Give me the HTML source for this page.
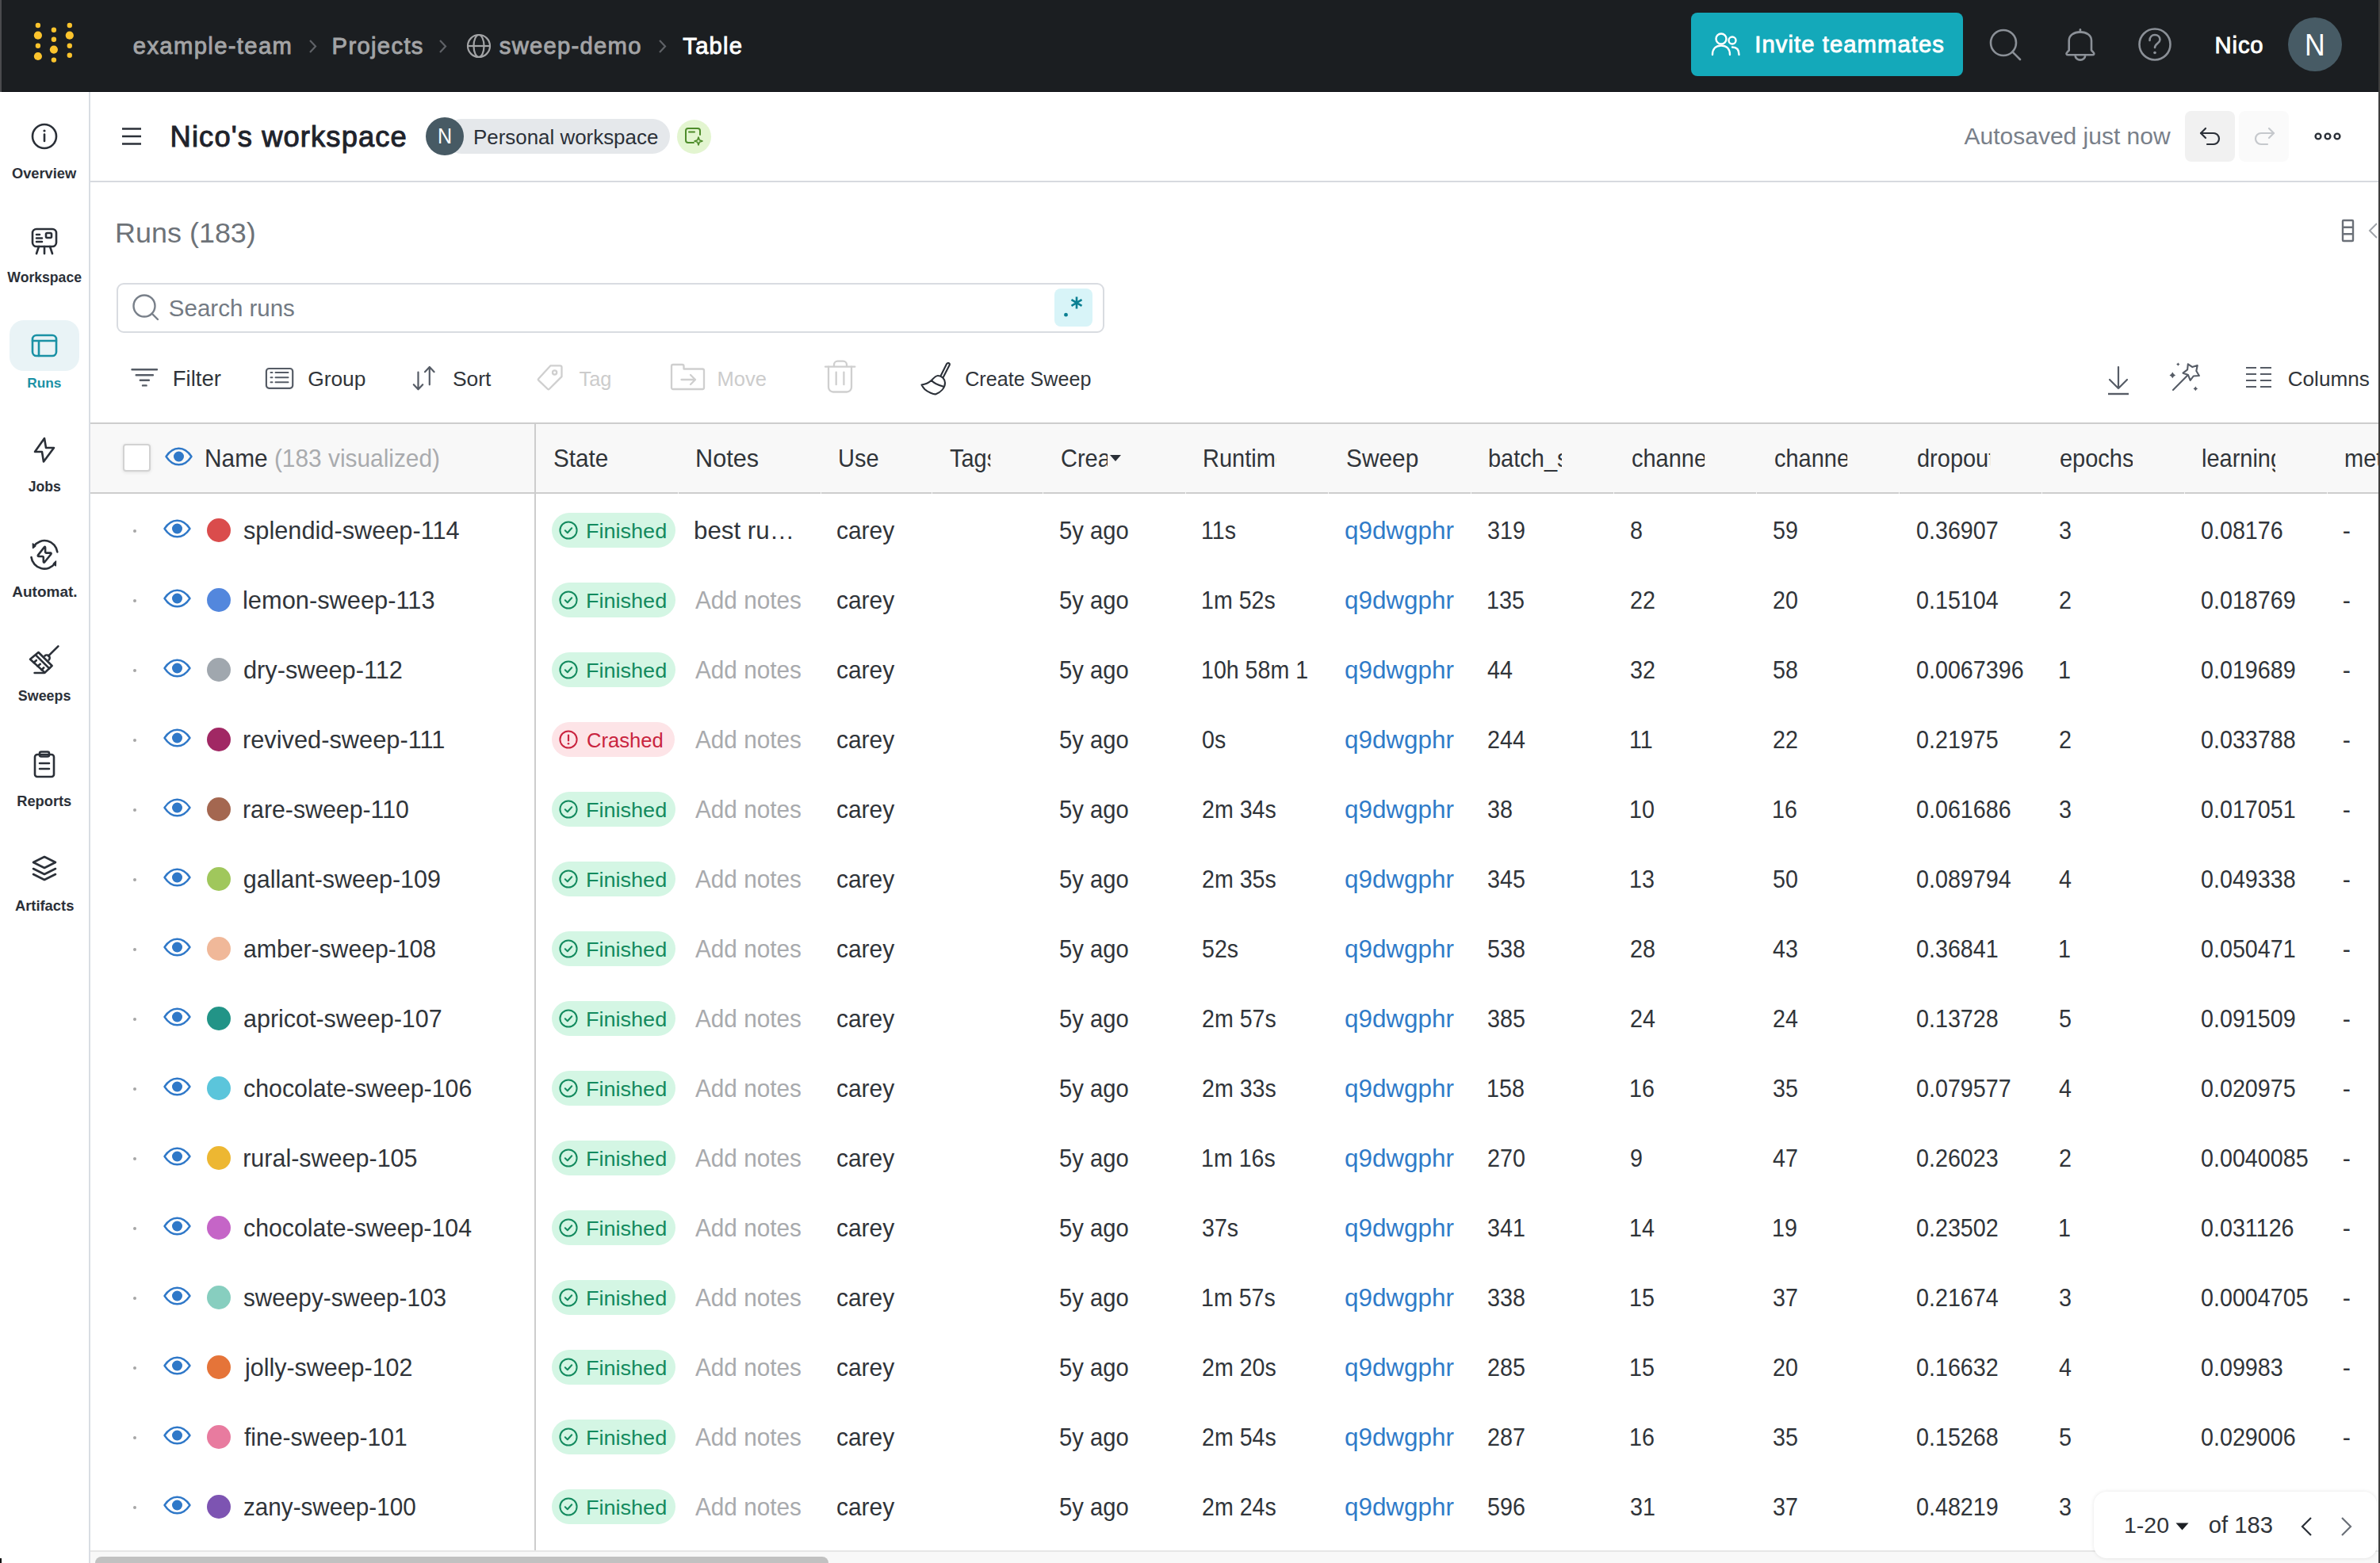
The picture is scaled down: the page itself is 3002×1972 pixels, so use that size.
<!DOCTYPE html>
<html><head><meta charset="utf-8"><title>Runs</title>
<style>
html,body{margin:0;padding:0;width:3002px;height:1972px;overflow:hidden;background:#fff;}
body{position:relative;font-family:"Liberation Sans",sans-serif;}
.t{position:absolute;white-space:nowrap;line-height:1;}
svg{overflow:visible}
</style></head><body>
<div style="position:absolute;left:0px;top:0px;width:3002px;height:116px;background:#1b1e21"></div>
<div style="position:absolute;left:0px;top:114.5px;width:3002px;height:1.5px;background:#0b0e12"></div>
<div style="position:absolute;left:0px;top:0px;width:2px;height:116px;background:#4a4b4e"></div>
<svg style="position:absolute;left:0px;top:0px;" width="116" height="116" viewBox="0 0 116 116" fill="none"><circle cx="47.9" cy="32" r="3.2" fill="#fcc42d"/><circle cx="47.9" cy="44.7" r="5.1" fill="#fcc42d"/><circle cx="47.9" cy="57.8" r="3.2" fill="#fcc42d"/><circle cx="47.9" cy="71" r="5.1" fill="#fcc42d"/><circle cx="67.9" cy="37.8" r="3.2" fill="#fcc42d"/><circle cx="67.9" cy="49.8" r="3.2" fill="#fcc42d"/><circle cx="67.9" cy="62.6" r="5.1" fill="#fcc42d"/><circle cx="67.9" cy="75.6" r="3.2" fill="#fcc42d"/><circle cx="87.8" cy="32" r="3.2" fill="#fcc42d"/><circle cx="87.8" cy="44.7" r="5.1" fill="#fcc42d"/><circle cx="87.8" cy="57.8" r="3.2" fill="#fcc42d"/><circle cx="87.8" cy="69.7" r="3.2" fill="#fcc42d"/></svg>
<div class="t" style="left:167.78px;top:43.57px;font-size:29.22px;color:#a3a4a6;font-weight:400;-webkit-text-stroke:0.9px #a3a4a6;letter-spacing:1.364px;">example-team</div>
<div class="t" style="left:418.61px;top:43.57px;font-size:29.22px;color:#a3a4a6;font-weight:400;-webkit-text-stroke:0.9px #a3a4a6;letter-spacing:1.326px;">Projects</div>
<div class="t" style="left:629.87px;top:43.57px;font-size:29.22px;color:#a3a4a6;font-weight:400;-webkit-text-stroke:0.9px #a3a4a6;letter-spacing:1.253px;">sweep-demo</div>
<div class="t" style="left:861.37px;top:43.57px;font-size:29.22px;color:#ffffff;font-weight:400;-webkit-text-stroke:0.9px #ffffff;letter-spacing:1.175px;">Table</div>
<svg style="position:absolute;left:389px;top:49px;" width="12" height="19" viewBox="0 0 12 19" fill="none"><path d="M2 2 L9 9.5 L2 17" stroke="#5f6267" stroke-width="2.2" fill="none"/></svg>
<svg style="position:absolute;left:553px;top:49px;" width="12" height="19" viewBox="0 0 12 19" fill="none"><path d="M2 2 L9 9.5 L2 17" stroke="#5f6267" stroke-width="2.2" fill="none"/></svg>
<svg style="position:absolute;left:830px;top:49px;" width="12" height="19" viewBox="0 0 12 19" fill="none"><path d="M2 2 L9 9.5 L2 17" stroke="#5f6267" stroke-width="2.2" fill="none"/></svg>
<svg style="position:absolute;left:588px;top:42px;" width="32" height="32" viewBox="0 0 32 32" fill="none"><circle cx="16" cy="16" r="14" stroke="#a3a4a6" stroke-width="2.2"/><ellipse cx="16" cy="16" rx="6.5" ry="14" stroke="#a3a4a6" stroke-width="2.2"/><path d="M2 16 H30" stroke="#a3a4a6" stroke-width="2.2"/></svg>
<div style="position:absolute;left:2133px;top:16px;width:343px;height:79.5px;background:#14a9ba;border-radius:8px"></div>
<svg style="position:absolute;left:2158px;top:40px;" width="38" height="32" viewBox="0 0 38 32" fill="none"><circle cx="13" cy="9" r="6.5" stroke="#fff" stroke-width="2.4"/><path d="M2 29 C2 21 7 17.5 13 17.5 C19 17.5 24 21 24 29" stroke="#fff" stroke-width="2.4" stroke-linecap="round"/><circle cx="27" cy="11" r="4.5" stroke="#fff" stroke-width="2.4"/><path d="M27 19.5 C32.5 19.5 35.5 23 35.5 29" stroke="#fff" stroke-width="2.4" stroke-linecap="round"/></svg>
<div class="t" style="left:2213.22px;top:42.27px;font-size:29.22px;color:#ffffff;font-weight:400;-webkit-text-stroke:0.9px #ffffff;letter-spacing:1.077px;">Invite teammates</div>
<svg style="position:absolute;left:2508px;top:35px;" width="44" height="42" viewBox="0 0 44 42" fill="none"><circle cx="19" cy="19" r="16" stroke="#8b9097" stroke-width="2.6"/><path d="M30.5 30.5 L40 40" stroke="#8b9097" stroke-width="2.6" stroke-linecap="round"/></svg>
<svg style="position:absolute;left:2602px;top:34px;" width="44" height="44" viewBox="0 0 44 44" fill="none"><path d="M7.7 29.5 V17 C7.7 10.5 14 6.4 21.9 6.4 C29.8 6.4 36 10.5 36 17 V29.5 L38.3 31.8 C40.2 33.7 39.4 35.3 37 35.3 H6.8 C4.4 35.3 3.6 33.7 5.5 31.8 Z" stroke="#8b9097" stroke-width="2.6" stroke-linejoin="round"/><path d="M15.6 36 A6.3 5.6 0 0 0 28.2 36" stroke="#8b9097" stroke-width="2.6"/><path d="M21.9 3.2 V6.4" stroke="#8b9097" stroke-width="2.6" stroke-linecap="round"/></svg>
<svg style="position:absolute;left:2696px;top:34px;" width="44" height="44" viewBox="0 0 44 44" fill="none"><circle cx="22" cy="22" r="19.5" stroke="#8b9097" stroke-width="2.6"/><path d="M15.5 17 C15.5 12.5 18.5 10 22 10 C25.8 10 28.5 12.5 28.5 16 C28.5 20.5 22 21 22 26" stroke="#8b9097" stroke-width="2.6" stroke-linecap="round"/><circle cx="22" cy="32.5" r="1.8" fill="#8b9097"/></svg>
<div class="t" style="left:2793.61px;top:43.27px;font-size:29.22px;color:#ffffff;font-weight:400;-webkit-text-stroke:0.9px #ffffff;letter-spacing:0.850px;">Nico</div>
<div style="position:absolute;left:2886px;top:22px;width:68px;height:68px;background:#475b65;border-radius:50%"></div>
<div class="t" style="left:2907.05px;top:36.62px;font-size:39.20px;color:#ffffff;transform:scaleX(0.9085);transform-origin:0 0;">N</div>
<div style="position:absolute;left:112px;top:116px;width:2px;height:1856px;background:#d9dde3"></div>
<div style="position:absolute;left:12px;top:404px;width:88px;height:64px;background:#e9f3f6;border-radius:18px"></div>
<div class="t" style="left:14.97px;top:209.93px;font-size:18.28px;color:#2b3038;font-weight:700;">Overview</div>
<div class="t" style="left:9.35px;top:342.47px;font-size:17.63px;color:#2b3038;font-weight:700;">Workspace</div>
<div class="t" style="left:34.21px;top:474.79px;font-size:17.26px;color:#1a91a5;font-weight:700;">Runs</div>
<div class="t" style="left:35.67px;top:606.49px;font-size:17.61px;color:#2b3038;font-weight:700;">Jobs</div>
<div class="t" style="left:15.32px;top:737.33px;font-size:18.99px;color:#2b3038;font-weight:700;">Automat.</div>
<div class="t" style="left:22.84px;top:870.26px;font-size:17.88px;color:#2b3038;font-weight:700;">Sweeps</div>
<div class="t" style="left:21.20px;top:1001.91px;font-size:18.30px;color:#2b3038;font-weight:700;">Reports</div>
<div class="t" style="left:18.88px;top:1133.85px;font-size:18.37px;color:#2b3038;font-weight:700;">Artifacts</div>
<svg style="position:absolute;left:38px;top:154px;" width="36" height="36" viewBox="0 0 36 36" fill="none"><circle cx="18" cy="18" r="15" stroke="#2b3038" stroke-width="2.6" stroke-linecap="round" stroke-linejoin="round"/><path d="M18 15.5 V24" stroke="#2b3038" stroke-width="2.6" stroke-linecap="round" stroke-linejoin="round"/><circle cx="18" cy="11" r="1.6" fill="#2b3038"/></svg>
<svg style="position:absolute;left:38px;top:286px;" width="36" height="36" viewBox="0 0 36 36" fill="none"><rect x="3" y="3" width="30" height="22" rx="5" stroke="#2b3038" stroke-width="2.6" stroke-linecap="round" stroke-linejoin="round"/><path d="M8 10 H12 M8 14.5 H15 M8 19 H15" stroke="#2b3038" stroke-width="2.6" stroke-linecap="round" stroke-linejoin="round"/><rect x="20" y="8" width="7" height="6" rx="1.5" stroke="#2b3038" stroke-width="2.6" stroke-linecap="round" stroke-linejoin="round"/><path d="M11 25 L8 34 M18 25 V34 M25 25 L28 34" stroke="#2b3038" stroke-width="2.6" stroke-linecap="round" stroke-linejoin="round"/></svg>
<svg style="position:absolute;left:38px;top:418px;" width="36" height="36" viewBox="0 0 36 36" fill="none"><rect x="3" y="5" width="30" height="26" rx="5" stroke="#1a91a5" stroke-width="2.6" stroke-linecap="round" stroke-linejoin="round"/><path d="M3 12 H33 M11 12 V31" stroke="#1a91a5" stroke-width="2.6" stroke-linecap="round" stroke-linejoin="round"/></svg>
<svg style="position:absolute;left:38px;top:550px;" width="36" height="36" viewBox="0 0 36 36" fill="none"><path d="M18 3 L6 20 H15 L17 32.5 L30 15 H20 Z" stroke="#2b3038" stroke-width="2.6" stroke-linecap="round" stroke-linejoin="round"/></svg>
<svg style="position:absolute;left:30px;top:675px;" width="52" height="50" viewBox="0 0 52 50" fill="none"><path d="M12.8 14.2 A16.2 16.2 0 0 1 42.3 21.4" stroke="#2b3038" stroke-width="2.6" stroke-linecap="round" stroke-linejoin="round"/><path d="M9.5 28 A16.6 16.6 0 0 0 39.4 35.8" stroke="#2b3038" stroke-width="2.6" stroke-linecap="round" stroke-linejoin="round"/><path d="M11.3 10.9 L11.5 16.6 L14.8 13.9 Z M40.5 33 L40.3 38.9 L37.3 36.3 Z" fill="#2b3038" stroke="#2b3038" stroke-width="1.4" stroke-linejoin="round"/><path d="M25.9 15.3 L18 25.4 Q17.2 27 19 27 H23.3 Q24.8 27 24.8 28.5 V33.6 Q25 35.4 26.4 34 L34.3 24.2 Q35.2 22.6 33.5 22.6 H28.6 Q27.1 22.6 27.1 21.1 V16 Q26.9 14.2 25.9 15.3 Z" stroke="#2b3038" stroke-width="2.6" stroke-linecap="round" stroke-linejoin="round"/></svg>
<svg style="position:absolute;left:30px;top:800px;" width="52" height="60" viewBox="0 0 52 60" fill="none"><path d="M8 31.8 L18.5 23 L35.6 40 L26.6 48.6 Z" stroke="#2b3038" stroke-width="2.6" stroke-linecap="round" stroke-linejoin="round"/><path d="M15.5 26.8 L32.2 43.3" stroke="#2b3038" stroke-width="2.6" stroke-linecap="round" stroke-linejoin="round"/><path d="M12.8 35.8 L15.8 33.2 M17.6 40.6 L20.8 37.8 M22.4 45.2 L25.2 42.5" stroke="#2b3038" stroke-width="2.6" stroke-linecap="round" stroke-linejoin="round"/><path d="M26.5 27.5 A3.3 3.3 0 0 1 31.6 32.6" stroke="#2b3038" stroke-width="2.6" stroke-linecap="round" stroke-linejoin="round"/><path d="M31 27.6 L43.4 15.3" stroke="#2b3038" stroke-width="2.6" stroke-linecap="round" stroke-linejoin="round"/><path d="M13.6 49 H26" stroke="#2b3038" stroke-width="2.6" stroke-linecap="round" stroke-linejoin="round"/></svg>
<svg style="position:absolute;left:38px;top:946px;" width="36" height="36" viewBox="0 0 36 36" fill="none"><rect x="6" y="6" width="24" height="28" rx="3" stroke="#2b3038" stroke-width="2.6" stroke-linecap="round" stroke-linejoin="round"/><rect x="12" y="2.5" width="12" height="6" rx="2" stroke="#2b3038" stroke-width="2.6" stroke-linecap="round" stroke-linejoin="round"/><path d="M12 17 H24 M12 24 H24" stroke="#2b3038" stroke-width="2.6" stroke-linecap="round" stroke-linejoin="round"/></svg>
<svg style="position:absolute;left:38px;top:1078px;" width="36" height="36" viewBox="0 0 36 36" fill="none"><path d="M18 3 L32 10 L18 17 L4 10 Z" stroke="#2b3038" stroke-width="2.6" stroke-linecap="round" stroke-linejoin="round"/><path d="M4 18 L18 25 L32 18" stroke="#2b3038" stroke-width="2.6" stroke-linecap="round" stroke-linejoin="round"/><path d="M4 25 L18 32 L32 25" stroke="#2b3038" stroke-width="2.6" stroke-linecap="round" stroke-linejoin="round"/></svg>
<div style="position:absolute;left:114px;top:227.5px;width:2886px;height:2px;background:#d7dadf"></div>
<svg style="position:absolute;left:152px;top:160px;" width="28" height="24" viewBox="0 0 28 24" fill="none"><path d="M2 2.5 H26 M2 12 H26 M2 21.5 H26" stroke="#2b3038" stroke-width="2.4"/></svg>
<div class="t" style="left:214.59px;top:154.94px;font-size:36.34px;color:#1f232b;font-weight:400;-webkit-text-stroke:1.0px #1f232b;letter-spacing:1.110px;">Nico&#39;s workspace</div>
<div style="position:absolute;left:560px;top:150px;width:284.5px;height:43.7px;background:#e5e8eb;border-radius:22px"></div>
<div style="position:absolute;left:537px;top:148px;width:48px;height:48px;background:#475a64;border-radius:50%"></div>
<div class="t" style="left:551.89px;top:158.44px;font-size:27.60px;color:#ffffff;transform:scaleX(0.9090);transform-origin:0 0;">N</div>
<div class="t" style="left:596.93px;top:160.85px;font-size:25.93px;color:#2b3038;font-weight:400;">Personal workspace</div>
<div style="position:absolute;left:853.6px;top:150.5px;width:43px;height:43px;background:#e3f5d0;border-radius:50%"></div>
<svg style="position:absolute;left:862px;top:159px;" width="26" height="26" viewBox="0 0 26 26" fill="none"><path d="M13 21 H6 A3 3 0 0 1 3 18 V6 A3 3 0 0 1 6 3 H18 A3 3 0 0 1 21 6 V11" stroke="#4e8c2a" stroke-width="2" fill="none" stroke-linecap="round"/><path d="M7 7.5 H14" stroke="#4e8c2a" stroke-width="2" stroke-linecap="round"/><path d="M19 14 L20.3 17.7 L24 19 L20.3 20.3 L19 24 L17.7 20.3 L14 19 L17.7 17.7 Z" stroke="#4e8c2a" stroke-width="1.6" fill="none" stroke-linejoin="round"/></svg>
<div class="t" style="left:2477.50px;top:157.19px;font-size:30.01px;color:#79808a;font-weight:400;">Autosaved just now</div>
<div style="position:absolute;left:2756px;top:140px;width:63px;height:63.5px;background:#f1f1f1;border-radius:8px"></div>
<div style="position:absolute;left:2824px;top:140px;width:63px;height:63.5px;background:#fafafa;border-radius:8px"></div>
<svg style="position:absolute;left:2773px;top:159px;" width="30" height="26" viewBox="0 0 30 26" fill="none"><path d="M9 3 L3 9 L9 15" stroke="#2b3038" stroke-width="2.2" fill="none" stroke-linecap="round" stroke-linejoin="round"/><path d="M3 9 H19 A7 7 0 0 1 19 23 H11" stroke="#2b3038" stroke-width="2.2" fill="none" stroke-linecap="round"/></svg>
<svg style="position:absolute;left:2841px;top:159px;" width="30" height="26" viewBox="0 0 30 26" fill="none"><path d="M21 3 L27 9 L21 15" stroke="#c5c8cc" stroke-width="2.2" fill="none" stroke-linecap="round" stroke-linejoin="round"/><path d="M27 9 H11 A7 7 0 0 0 11 23 H19" stroke="#c5c8cc" stroke-width="2.2" fill="none" stroke-linecap="round"/></svg>
<svg style="position:absolute;left:2919px;top:163px;" width="34" height="18" viewBox="0 0 34 18" fill="none"><circle cx="5" cy="9" r="3.4" stroke="#2b3038" stroke-width="2.4"/><circle cx="17" cy="9" r="3.4" stroke="#2b3038" stroke-width="2.4"/><circle cx="29" cy="9" r="3.4" stroke="#2b3038" stroke-width="2.4"/></svg>
<div class="t" style="left:145.12px;top:276.08px;font-size:35.94px;color:#6d7278;font-weight:400;">Runs (183)</div>
<svg style="position:absolute;left:2953px;top:276px;" width="18" height="30" viewBox="0 0 18 30" fill="none"><rect x="2" y="2" width="13" height="26" rx="1" stroke="#6b7078" stroke-width="2.4"/><path d="M2 10.7 H15 M2 19.3 H15" stroke="#6b7078" stroke-width="2.4"/></svg>
<svg style="position:absolute;left:2986px;top:280px;" width="14" height="22" viewBox="0 0 14 22" fill="none"><path d="M12 2 L3 11 L12 20" stroke="#a0a4aa" stroke-width="2" fill="none"/></svg>
<div style="position:absolute;left:147px;top:356.5px;width:1246px;height:63px;border:2px solid #d9dce1;border-radius:9px;box-sizing:border-box;background:#fff"></div>
<svg style="position:absolute;left:165.3px;top:368.8px;" width="38" height="36" viewBox="0 0 38 36" fill="none"><circle cx="17" cy="17" r="13.5" stroke="#79808a" stroke-width="2.4"/><path d="M26.5 26.5 L34 34" stroke="#79808a" stroke-width="2.4" stroke-linecap="round"/></svg>
<div class="t" style="left:212.82px;top:374.03px;font-size:29.50px;color:#737a83;font-weight:400;">Search runs</div>
<div style="position:absolute;left:1330px;top:364px;width:47.6px;height:47.6px;background:#d8f4f8;border-radius:8px"></div>
<svg style="position:absolute;left:1330px;top:364px;" width="48" height="48" viewBox="0 0 48 48" fill="none"><circle cx="14.5" cy="33.2" r="2.4" fill="#0a7f92"/><path d="M28 10.5 V25.5 M21.5 14.2 L34.5 21.8 M21.5 21.8 L34.5 14.2" stroke="#0a7f92" stroke-width="2.6"/></svg>
<svg style="position:absolute;left:163px;top:462px;" width="40" height="30" viewBox="0 0 40 30" fill="none"><path d="M3.5 4.3 H35 M8.7 11.3 H29.9 M13.8 17.8 H24.9 M17 24.4 H21.6" stroke="#565c66" stroke-width="2.4" stroke-linecap="round"/></svg>
<div class="t" style="left:217.80px;top:464.14px;font-size:27.48px;color:#303439;font-weight:400;">Filter</div>
<svg style="position:absolute;left:332px;top:462px;" width="40" height="30" viewBox="0 0 40 30" fill="none"><rect x="3.9" y="3" width="33.3" height="24.8" rx="3.5" stroke="#565c66" stroke-width="2.2"/><path d="M9.5 8 H11.5 M9.5 14.3 H11.5 M9.5 20.3 H11.5 M15.5 8 H31.5 M15.5 14.3 H31.5 M15.5 20.3 H31.5" stroke="#565c66" stroke-width="2" stroke-linecap="round"/></svg>
<div class="t" style="left:388.18px;top:465.08px;font-size:26.36px;color:#303439;font-weight:400;">Group</div>
<svg style="position:absolute;left:518px;top:458px;" width="34" height="38" viewBox="0 0 34 38" fill="none"><path d="M9.5 11.5 V33.3 M3.8 27.2 L9.5 33.3 L15.2 27.2" stroke="#565c66" stroke-width="2.2" stroke-linecap="round" stroke-linejoin="round"/><path d="M23.8 5.1 V27.3 M18 11.2 L23.8 5.1 L29.6 11.2" stroke="#565c66" stroke-width="2.2" stroke-linecap="round" stroke-linejoin="round"/></svg>
<div class="t" style="left:570.94px;top:465.01px;font-size:26.45px;color:#303439;font-weight:400;">Sort</div>
<svg style="position:absolute;left:675px;top:458px;" width="38" height="38" viewBox="0 0 38 38" fill="none"><path d="M19.5 3.3 H31.5 A2 2 0 0 1 33.5 5.3 V17.1 L17.6 33 Q16.8 33.8 16 33 L4.1 21.6 Q3.3 20.8 4.1 20 Z" stroke="#cfcfcf" stroke-width="2.3" stroke-linecap="round" stroke-linejoin="round"/><circle cx="24.6" cy="12" r="2.6" stroke="#cfcfcf" stroke-width="2.3" stroke-linecap="round" stroke-linejoin="round"/></svg>
<div class="t" style="left:730.49px;top:465.91px;font-size:25.39px;color:#cccccc;font-weight:400;">Tag</div>
<svg style="position:absolute;left:844px;top:456px;" width="48" height="38" viewBox="0 0 48 38" fill="none"><path d="M3 33 V6 A2 2 0 0 1 5 4 H16.5 A2 2 0 0 1 18.5 6 V9.5 H42 A2 2 0 0 1 44 11.5 V33 A2 2 0 0 1 42 35 H5 A2 2 0 0 1 3 33 Z" stroke="#cfcfcf" stroke-width="2.3" stroke-linecap="round" stroke-linejoin="round"/><path d="M15.5 23 H33 M27 17 L33 23 L27 29" stroke="#cfcfcf" stroke-width="2.3" stroke-linecap="round" stroke-linejoin="round"/></svg>
<div class="t" style="left:904.46px;top:465.78px;font-size:25.55px;color:#cccccc;font-weight:400;">Move</div>
<svg style="position:absolute;left:1039px;top:453px;" width="42" height="46" viewBox="0 0 42 46" fill="none"><path d="M2 9.7 H39.3" stroke="#cfcfcf" stroke-width="2.3" stroke-linecap="round" stroke-linejoin="round"/><path d="M13 9 V7.2 A4.5 4.5 0 0 1 17.5 2.7 H24.5 A4.5 4.5 0 0 1 29 7.2 V9" stroke="#cfcfcf" stroke-width="2.3" stroke-linecap="round" stroke-linejoin="round"/><path d="M6 9.7 V35.5 A6 6 0 0 0 12 41.5 H29 A6 6 0 0 0 35 35.5 V9.7" stroke="#cfcfcf" stroke-width="2.3" stroke-linecap="round" stroke-linejoin="round"/><path d="M15.7 16.6 V32.2 M25.4 16.6 V32.2" stroke="#cfcfcf" stroke-width="2.3" stroke-linecap="round" stroke-linejoin="round"/></svg>
<svg style="position:absolute;left:1150px;top:450px;" width="60" height="55" viewBox="0 0 60 55" fill="none"><path d="M12.5 35.5 C18 35 21.5 33 25 29.8 C28.5 26 30.5 24 33 24 C38 24 42 28.5 42 33 C42 40 36 45 30.5 47.3 C28 48 20 44.5 16.5 41.3 C14.8 39.5 13.5 37.5 12.5 35.5 Z M25 29.8 C28 34 34 36 40.2 37.8 M36.3 24.8 L44 9.3 C45 7.3 48.2 7.8 47.8 10.3 L39.6 26.3" stroke="#2b3038" stroke-width="2.1" stroke-linejoin="round" stroke-linecap="round"/></svg>
<div class="t" style="left:1217.24px;top:466.14px;font-size:25.12px;color:#303439;font-weight:400;">Create Sweep</div>
<svg style="position:absolute;left:2656px;top:460px;" width="32" height="40" viewBox="0 0 32 40" fill="none"><path d="M16 3 V30 M5 19 L16 30 L27 19" stroke="#565c66" stroke-width="2.2" stroke-linecap="round" stroke-linejoin="round"/><path d="M3 37 H29" stroke="#565c66" stroke-width="2.4"/></svg>
<svg style="position:absolute;left:2700px;top:440px;" width="100" height="70" viewBox="0 0 100 70" fill="none"><path d="M59.8 19.3 L65.4 23.1 L71.7 21 L70.3 28 L73.9 34 L66.7 34.5 L62.7 39.9 L60 33.1 L53.5 30.7 L59.1 26.4 Z" stroke="#565c66" stroke-width="2.1" stroke-linejoin="round" fill="none"/><path d="M59.3 33.4 L41 52" stroke="#565c66" stroke-width="2.1" stroke-linecap="round"/><path d="M40.3 29.599999999999998 Q41.44 32.26 44.099999999999994 33.4 Q41.44 34.54 40.3 37.199999999999996 Q39.16 34.54 36.5 33.4 Q39.16 32.26 40.3 29.599999999999998 Z M47.3 17.400000000000002 Q47.959999999999994 18.94 49.5 19.6 Q47.959999999999994 20.26 47.3 21.8 Q46.64 20.26 45.099999999999994 19.6 Q46.64 18.94 47.3 17.400000000000002 Z M69.3 47.6 Q70.14 49.559999999999995 72.1 50.4 Q70.14 51.24 69.3 53.199999999999996 Q68.46 51.24 66.5 50.4 Q68.46 49.559999999999995 69.3 47.6 Z" fill="#565c66"/></svg>
<svg style="position:absolute;left:2831px;top:461px;" width="36" height="30" viewBox="0 0 36 30" fill="none"><path d="M2 3 H15 M20 3 H34 M2 11 H15 M20 11 H34 M2 19 H15 M20 19 H34 M2 27 H15 M20 27 H34" stroke="#565c66" stroke-width="2.2"/></svg>
<div class="t" style="left:2885.69px;top:465.28px;font-size:26.13px;color:#303439;font-weight:400;">Columns</div>
<div style="position:absolute;left:114px;top:533px;width:2886px;height:89px;background:#f8f8f8"></div>
<div style="position:absolute;left:114px;top:533px;width:2886px;height:2px;background:#cdcdcd"></div>
<div style="position:absolute;left:114px;top:621px;width:2886px;height:2px;background:#cdcdcd"></div>
<div style="position:absolute;left:854.5px;top:621px;width:1.5px;height:2px;background:#f4f4f4"></div>
<div style="position:absolute;left:1034.5px;top:621px;width:1.5px;height:2px;background:#f4f4f4"></div>
<div style="position:absolute;left:1174.5px;top:621px;width:1.5px;height:2px;background:#f4f4f4"></div>
<div style="position:absolute;left:1314.5px;top:621px;width:1.5px;height:2px;background:#f4f4f4"></div>
<div style="position:absolute;left:1494.5px;top:621px;width:1.5px;height:2px;background:#f4f4f4"></div>
<div style="position:absolute;left:1674.5px;top:621px;width:1.5px;height:2px;background:#f4f4f4"></div>
<div style="position:absolute;left:1854.5px;top:621px;width:1.5px;height:2px;background:#f4f4f4"></div>
<div style="position:absolute;left:2034.5px;top:621px;width:1.5px;height:2px;background:#f4f4f4"></div>
<div style="position:absolute;left:2214.5px;top:621px;width:1.5px;height:2px;background:#f4f4f4"></div>
<div style="position:absolute;left:2394.5px;top:621px;width:1.5px;height:2px;background:#f4f4f4"></div>
<div style="position:absolute;left:2574.5px;top:621px;width:1.5px;height:2px;background:#f4f4f4"></div>
<div style="position:absolute;left:2754.5px;top:621px;width:1.5px;height:2px;background:#f4f4f4"></div>
<div style="position:absolute;left:2934.5px;top:621px;width:1.5px;height:2px;background:#f4f4f4"></div>
<div style="position:absolute;left:674px;top:533px;width:2px;height:1423px;background:#cdcdcd"></div>
<div style="position:absolute;left:114px;top:1956px;width:2886px;height:2px;background:#e6e6e6"></div>
<div style="position:absolute;left:114px;top:1958px;width:2886px;height:14px;background:#f8f8f8"></div>
<div style="position:absolute;left:120px;top:1964px;width:925px;height:16px;background:#c1c1c1;border-radius:8px"></div>
<div style="position:absolute;left:154.5px;top:560px;width:35px;height:35px;background:#fff;border:2px solid #d2d2d2;border-radius:4px;box-sizing:border-box;box-shadow:0 1px 4px rgba(0,0,0,.10)"></div>
<svg style="position:absolute;left:207.5px;top:564.2px;" width="35" height="24" viewBox="0 0 35 24" fill="none"><path d="M1.5 12 C7 3.5 12 1.7 17.5 1.7 C23 1.7 28 3.5 33.5 12 C28 20.5 23 22.3 17.5 22.3 C12 22.3 7 20.5 1.5 12 Z" stroke="#2f78c8" stroke-width="2.4" stroke-linejoin="round" fill="none"/><circle cx="17.5" cy="12" r="6.5" fill="#2f78c8"/></svg>
<div class="t" style="left:258.21px;top:562.88px;font-size:30.50px;color:#303439;transform:scaleX(0.9787);transform-origin:0 0;">Name <span style="color:#a9abae">(183 visualized)</span></div>
<div class="t" style="left:697.81px;top:562.88px;font-size:30.50px;color:#303439;transform:scaleX(0.9725);transform-origin:0 0;">State</div>
<div class="t" style="left:876.55px;top:562.88px;font-size:30.50px;color:#303439;transform:scaleX(1.0050);transform-origin:0 0;">Notes</div>
<div class="t" style="left:1056.97px;top:562.88px;font-size:30.50px;color:#303439;transform:scaleX(0.9500);transform-origin:0 0;width:54.8px;overflow:hidden;padding-bottom:10px;">User</div>
<div class="t" style="left:1198.42px;top:562.88px;font-size:30.50px;color:#303439;transform:scaleX(0.9500);transform-origin:0 0;width:54.3px;overflow:hidden;padding-bottom:10px;">Tags</div>
<div class="t" style="left:1337.55px;top:562.88px;font-size:30.50px;color:#303439;transform:scaleX(0.9500);transform-origin:0 0;width:61.5px;overflow:hidden;padding-bottom:10px;">Created</div>
<div class="t" style="left:1516.68px;top:562.88px;font-size:30.50px;color:#303439;transform:scaleX(0.9500);transform-origin:0 0;width:98.2px;overflow:hidden;padding-bottom:10px;">Runtime</div>
<div class="t" style="left:1697.81px;top:562.88px;font-size:30.50px;color:#303439;transform:scaleX(0.9787);transform-origin:0 0;">Sweep</div>
<div class="t" style="left:1877.26px;top:562.88px;font-size:30.50px;color:#303439;transform:scaleX(0.9500);transform-origin:0 0;width:97.6px;overflow:hidden;padding-bottom:10px;">batch_size</div>
<div class="t" style="left:2057.84px;top:562.88px;font-size:30.50px;color:#303439;transform:scaleX(0.9500);transform-origin:0 0;width:97.0px;overflow:hidden;padding-bottom:10px;">channels_one</div>
<div class="t" style="left:2237.84px;top:562.88px;font-size:30.50px;color:#303439;transform:scaleX(0.9500);transform-origin:0 0;width:97.0px;overflow:hidden;padding-bottom:10px;">channels_two</div>
<div class="t" style="left:2417.84px;top:562.88px;font-size:30.50px;color:#303439;transform:scaleX(0.9500);transform-origin:0 0;width:97.0px;overflow:hidden;padding-bottom:10px;">dropout</div>
<div class="t" style="left:2597.84px;top:562.88px;font-size:30.50px;color:#303439;transform:scaleX(0.9500);transform-origin:0 0;width:97.0px;overflow:hidden;padding-bottom:10px;">epochs</div>
<div class="t" style="left:2777.26px;top:562.88px;font-size:30.50px;color:#303439;transform:scaleX(0.9500);transform-origin:0 0;width:97.6px;overflow:hidden;padding-bottom:10px;">learning_rate</div>
<div class="t" style="left:2957.26px;top:562.88px;font-size:30.50px;color:#303439;transform:scaleX(0.9500);transform-origin:0 0;width:97.6px;overflow:hidden;padding-bottom:10px;">metric</div>
<svg style="position:absolute;left:1399px;top:573px;" width="16" height="10" viewBox="0 0 16 10" fill="none"><path d="M1 1 H15 L8 9 Z" fill="#2b3038"/></svg>
<div style="position:absolute;left:168px;top:667.9px;width:4px;height:4px;background:#a6a6a6;border-radius:50%"></div>
<svg style="position:absolute;left:206px;top:655.0px;" width="35" height="24" viewBox="0 0 35 24" fill="none"><path d="M1.5 12 C7 3.5 12 1.7 17.5 1.7 C23 1.7 28 3.5 33.5 12 C28 20.5 23 22.3 17.5 22.3 C12 22.3 7 20.5 1.5 12 Z" stroke="#2f78c8" stroke-width="2.4" stroke-linejoin="round" fill="none"/><circle cx="17.5" cy="12" r="6.5" fill="#2f78c8"/></svg>
<div style="position:absolute;left:260.5px;top:653.5px;width:30.6px;height:30.6px;background:#DA4C4C;border-radius:50%"></div>
<div class="t" style="left:307.39px;top:654.28px;font-size:30.50px;color:#303439;transform:scaleX(1.0070);transform-origin:0 0;">splendid-sweep-114</div>
<div style="position:absolute;left:696px;top:646.8px;width:156px;height:44px;background:#d4f6e4;border-radius:22px"></div>
<svg style="position:absolute;left:705px;top:656.8px;" width="24" height="24" viewBox="0 0 24 24" fill="none"><circle cx="12" cy="12" r="10.6" stroke="#138a5e" stroke-width="2"/><path d="M7.8 12.3 L10.8 15.2 L16.2 9.3" stroke="#138a5e" stroke-width="2" fill="none" stroke-linecap="round" stroke-linejoin="round"/></svg>
<div class="t" style="left:738.84px;top:656.57px;font-size:26.50px;color:#138a5e;transform:scaleX(1.0201);transform-origin:0 0;">Finished</div>
<div class="t" style="left:875.12px;top:654.28px;font-size:30.50px;color:#303439;transform:scaleX(1.0259);transform-origin:0 0;">best ru…</div>
<div class="t" style="left:1055.40px;top:654.28px;font-size:30.50px;color:#303439;transform:scaleX(0.9814);transform-origin:0 0;">carey</div>
<div class="t" style="left:1335.83px;top:654.28px;font-size:30.50px;color:#303439;transform:scaleX(0.9568);transform-origin:0 0;">5y ago</div>
<div class="t" style="left:1515.00px;top:654.28px;font-size:30.50px;color:#303439;transform:scaleX(0.9370);transform-origin:0 0;width:146.7px;overflow:hidden;padding-bottom:10px;">11s</div>
<div class="t" style="left:1695.94px;top:654.28px;font-size:30.50px;color:#2f7bc9;transform:scaleX(1.0292);transform-origin:0 0;">q9dwgphr</div>
<div class="t" style="left:1876.14px;top:654.28px;font-size:30.50px;color:#303439;transform:scaleX(0.9410);transform-origin:0 0;">319</div>
<div class="t" style="left:2055.85px;top:654.28px;font-size:30.50px;color:#303439;transform:scaleX(0.9410);transform-origin:0 0;">8</div>
<div class="t" style="left:2235.85px;top:654.28px;font-size:30.50px;color:#303439;transform:scaleX(0.9410);transform-origin:0 0;">59</div>
<div class="t" style="left:2417.14px;top:654.28px;font-size:30.50px;color:#303439;transform:scaleX(0.9410);transform-origin:0 0;">0.36907</div>
<div class="t" style="left:2597.14px;top:654.28px;font-size:30.50px;color:#303439;transform:scaleX(0.9410);transform-origin:0 0;">3</div>
<div class="t" style="left:2776.14px;top:654.28px;font-size:30.50px;color:#303439;transform:scaleX(0.9410);transform-origin:0 0;">0.08176</div>
<div class="t" style="left:2954.78px;top:654.28px;font-size:30.50px;color:#303439;">-</div>
<div style="position:absolute;left:168px;top:755.9px;width:4px;height:4px;background:#a6a6a6;border-radius:50%"></div>
<svg style="position:absolute;left:206px;top:743.0px;" width="35" height="24" viewBox="0 0 35 24" fill="none"><path d="M1.5 12 C7 3.5 12 1.7 17.5 1.7 C23 1.7 28 3.5 33.5 12 C28 20.5 23 22.3 17.5 22.3 C12 22.3 7 20.5 1.5 12 Z" stroke="#2f78c8" stroke-width="2.4" stroke-linejoin="round" fill="none"/><circle cx="17.5" cy="12" r="6.5" fill="#2f78c8"/></svg>
<div style="position:absolute;left:260.5px;top:741.5px;width:30.6px;height:30.6px;background:#5387DD;border-radius:50%"></div>
<div class="t" style="left:306.15px;top:742.28px;font-size:30.50px;color:#303439;transform:scaleX(1.0099);transform-origin:0 0;">lemon-sweep-113</div>
<div style="position:absolute;left:696px;top:734.8px;width:156px;height:44px;background:#d4f6e4;border-radius:22px"></div>
<svg style="position:absolute;left:705px;top:744.8px;" width="24" height="24" viewBox="0 0 24 24" fill="none"><circle cx="12" cy="12" r="10.6" stroke="#138a5e" stroke-width="2"/><path d="M7.8 12.3 L10.8 15.2 L16.2 9.3" stroke="#138a5e" stroke-width="2" fill="none" stroke-linecap="round" stroke-linejoin="round"/></svg>
<div class="t" style="left:738.84px;top:744.57px;font-size:26.50px;color:#138a5e;transform:scaleX(1.0201);transform-origin:0 0;">Finished</div>
<div class="t" style="left:877.00px;top:742.28px;font-size:30.50px;color:#a8aaad;transform:scaleX(0.9748);transform-origin:0 0;">Add notes</div>
<div class="t" style="left:1055.40px;top:742.28px;font-size:30.50px;color:#303439;transform:scaleX(0.9814);transform-origin:0 0;">carey</div>
<div class="t" style="left:1335.83px;top:742.28px;font-size:30.50px;color:#303439;transform:scaleX(0.9568);transform-origin:0 0;">5y ago</div>
<div class="t" style="left:1515.00px;top:742.28px;font-size:30.50px;color:#303439;transform:scaleX(0.9370);transform-origin:0 0;width:146.7px;overflow:hidden;padding-bottom:10px;">1m 52s</div>
<div class="t" style="left:1695.94px;top:742.28px;font-size:30.50px;color:#2f7bc9;transform:scaleX(1.0292);transform-origin:0 0;">q9dwgphr</div>
<div class="t" style="left:1874.99px;top:742.28px;font-size:30.50px;color:#303439;transform:scaleX(0.9410);transform-origin:0 0;">135</div>
<div class="t" style="left:2055.56px;top:742.28px;font-size:30.50px;color:#303439;transform:scaleX(0.9410);transform-origin:0 0;">22</div>
<div class="t" style="left:2235.56px;top:742.28px;font-size:30.50px;color:#303439;transform:scaleX(0.9410);transform-origin:0 0;">20</div>
<div class="t" style="left:2417.14px;top:742.28px;font-size:30.50px;color:#303439;transform:scaleX(0.9410);transform-origin:0 0;">0.15104</div>
<div class="t" style="left:2596.56px;top:742.28px;font-size:30.50px;color:#303439;transform:scaleX(0.9410);transform-origin:0 0;">2</div>
<div class="t" style="left:2776.14px;top:742.28px;font-size:30.50px;color:#303439;transform:scaleX(0.9410);transform-origin:0 0;">0.018769</div>
<div class="t" style="left:2954.78px;top:742.28px;font-size:30.50px;color:#303439;">-</div>
<div style="position:absolute;left:168px;top:843.9px;width:4px;height:4px;background:#a6a6a6;border-radius:50%"></div>
<svg style="position:absolute;left:206px;top:831.0px;" width="35" height="24" viewBox="0 0 35 24" fill="none"><path d="M1.5 12 C7 3.5 12 1.7 17.5 1.7 C23 1.7 28 3.5 33.5 12 C28 20.5 23 22.3 17.5 22.3 C12 22.3 7 20.5 1.5 12 Z" stroke="#2f78c8" stroke-width="2.4" stroke-linejoin="round" fill="none"/><circle cx="17.5" cy="12" r="6.5" fill="#2f78c8"/></svg>
<div style="position:absolute;left:260.5px;top:829.5px;width:30.6px;height:30.6px;background:#A0A7AE;border-radius:50%"></div>
<div class="t" style="left:306.77px;top:830.28px;font-size:30.50px;color:#303439;transform:scaleX(1.0069);transform-origin:0 0;">dry-sweep-112</div>
<div style="position:absolute;left:696px;top:822.8px;width:156px;height:44px;background:#d4f6e4;border-radius:22px"></div>
<svg style="position:absolute;left:705px;top:832.8px;" width="24" height="24" viewBox="0 0 24 24" fill="none"><circle cx="12" cy="12" r="10.6" stroke="#138a5e" stroke-width="2"/><path d="M7.8 12.3 L10.8 15.2 L16.2 9.3" stroke="#138a5e" stroke-width="2" fill="none" stroke-linecap="round" stroke-linejoin="round"/></svg>
<div class="t" style="left:738.84px;top:832.57px;font-size:26.50px;color:#138a5e;transform:scaleX(1.0201);transform-origin:0 0;">Finished</div>
<div class="t" style="left:877.00px;top:830.28px;font-size:30.50px;color:#a8aaad;transform:scaleX(0.9748);transform-origin:0 0;">Add notes</div>
<div class="t" style="left:1055.40px;top:830.28px;font-size:30.50px;color:#303439;transform:scaleX(0.9814);transform-origin:0 0;">carey</div>
<div class="t" style="left:1335.83px;top:830.28px;font-size:30.50px;color:#303439;transform:scaleX(0.9568);transform-origin:0 0;">5y ago</div>
<div class="t" style="left:1515.00px;top:830.28px;font-size:30.50px;color:#303439;transform:scaleX(0.9370);transform-origin:0 0;width:146.7px;overflow:hidden;padding-bottom:10px;">10h 58m 1</div>
<div class="t" style="left:1695.94px;top:830.28px;font-size:30.50px;color:#2f7bc9;transform:scaleX(1.0292);transform-origin:0 0;">q9dwgphr</div>
<div class="t" style="left:1876.43px;top:830.28px;font-size:30.50px;color:#303439;transform:scaleX(0.9410);transform-origin:0 0;">44</div>
<div class="t" style="left:2056.14px;top:830.28px;font-size:30.50px;color:#303439;transform:scaleX(0.9410);transform-origin:0 0;">32</div>
<div class="t" style="left:2235.85px;top:830.28px;font-size:30.50px;color:#303439;transform:scaleX(0.9410);transform-origin:0 0;">58</div>
<div class="t" style="left:2417.14px;top:830.28px;font-size:30.50px;color:#303439;transform:scaleX(0.9410);transform-origin:0 0;">0.0067396</div>
<div class="t" style="left:2595.99px;top:830.28px;font-size:30.50px;color:#303439;transform:scaleX(0.9410);transform-origin:0 0;">1</div>
<div class="t" style="left:2776.14px;top:830.28px;font-size:30.50px;color:#303439;transform:scaleX(0.9410);transform-origin:0 0;">0.019689</div>
<div class="t" style="left:2954.78px;top:830.28px;font-size:30.50px;color:#303439;">-</div>
<div style="position:absolute;left:168px;top:931.9px;width:4px;height:4px;background:#a6a6a6;border-radius:50%"></div>
<svg style="position:absolute;left:206px;top:919.0px;" width="35" height="24" viewBox="0 0 35 24" fill="none"><path d="M1.5 12 C7 3.5 12 1.7 17.5 1.7 C23 1.7 28 3.5 33.5 12 C28 20.5 23 22.3 17.5 22.3 C12 22.3 7 20.5 1.5 12 Z" stroke="#2f78c8" stroke-width="2.4" stroke-linejoin="round" fill="none"/><circle cx="17.5" cy="12" r="6.5" fill="#2f78c8"/></svg>
<div style="position:absolute;left:260.5px;top:917.5px;width:30.6px;height:30.6px;background:#A12864;border-radius:50%"></div>
<div class="t" style="left:306.15px;top:918.28px;font-size:30.50px;color:#303439;transform:scaleX(1.0091);transform-origin:0 0;">revived-sweep-111</div>
<div style="position:absolute;left:696px;top:910.8px;width:155px;height:44px;background:#fde4e7;border-radius:22px"></div>
<svg style="position:absolute;left:705px;top:920.8px;" width="24" height="24" viewBox="0 0 24 24" fill="none"><circle cx="12" cy="12" r="10.6" stroke="#c9243f" stroke-width="2"/><path d="M12 6.5 V13.5" stroke="#c9243f" stroke-width="2.2" stroke-linecap="round"/><circle cx="12" cy="17.2" r="1.3" fill="#c9243f"/></svg>
<div class="t" style="left:739.72px;top:920.57px;font-size:26.50px;color:#c9243f;transform:scaleX(0.9656);transform-origin:0 0;">Crashed</div>
<div class="t" style="left:877.00px;top:918.28px;font-size:30.50px;color:#a8aaad;transform:scaleX(0.9748);transform-origin:0 0;">Add notes</div>
<div class="t" style="left:1055.40px;top:918.28px;font-size:30.50px;color:#303439;transform:scaleX(0.9814);transform-origin:0 0;">carey</div>
<div class="t" style="left:1335.83px;top:918.28px;font-size:30.50px;color:#303439;transform:scaleX(0.9568);transform-origin:0 0;">5y ago</div>
<div class="t" style="left:1516.14px;top:918.28px;font-size:30.50px;color:#303439;transform:scaleX(0.9370);transform-origin:0 0;width:145.5px;overflow:hidden;padding-bottom:10px;">0s</div>
<div class="t" style="left:1695.94px;top:918.28px;font-size:30.50px;color:#2f7bc9;transform:scaleX(1.0292);transform-origin:0 0;">q9dwgphr</div>
<div class="t" style="left:1875.56px;top:918.28px;font-size:30.50px;color:#303439;transform:scaleX(0.9410);transform-origin:0 0;">244</div>
<div class="t" style="left:2054.99px;top:918.28px;font-size:30.50px;color:#303439;transform:scaleX(0.9410);transform-origin:0 0;">11</div>
<div class="t" style="left:2235.56px;top:918.28px;font-size:30.50px;color:#303439;transform:scaleX(0.9410);transform-origin:0 0;">22</div>
<div class="t" style="left:2417.14px;top:918.28px;font-size:30.50px;color:#303439;transform:scaleX(0.9410);transform-origin:0 0;">0.21975</div>
<div class="t" style="left:2596.56px;top:918.28px;font-size:30.50px;color:#303439;transform:scaleX(0.9410);transform-origin:0 0;">2</div>
<div class="t" style="left:2776.14px;top:918.28px;font-size:30.50px;color:#303439;transform:scaleX(0.9410);transform-origin:0 0;">0.033788</div>
<div class="t" style="left:2954.78px;top:918.28px;font-size:30.50px;color:#303439;">-</div>
<div style="position:absolute;left:168px;top:1019.9px;width:4px;height:4px;background:#a6a6a6;border-radius:50%"></div>
<svg style="position:absolute;left:206px;top:1007.0px;" width="35" height="24" viewBox="0 0 35 24" fill="none"><path d="M1.5 12 C7 3.5 12 1.7 17.5 1.7 C23 1.7 28 3.5 33.5 12 C28 20.5 23 22.3 17.5 22.3 C12 22.3 7 20.5 1.5 12 Z" stroke="#2f78c8" stroke-width="2.4" stroke-linejoin="round" fill="none"/><circle cx="17.5" cy="12" r="6.5" fill="#2f78c8"/></svg>
<div style="position:absolute;left:260.5px;top:1005.5px;width:30.6px;height:30.6px;background:#A46750;border-radius:50%"></div>
<div class="t" style="left:306.18px;top:1006.28px;font-size:30.50px;color:#303439;transform:scaleX(0.9932);transform-origin:0 0;">rare-sweep-110</div>
<div style="position:absolute;left:696px;top:998.8px;width:156px;height:44px;background:#d4f6e4;border-radius:22px"></div>
<svg style="position:absolute;left:705px;top:1008.8px;" width="24" height="24" viewBox="0 0 24 24" fill="none"><circle cx="12" cy="12" r="10.6" stroke="#138a5e" stroke-width="2"/><path d="M7.8 12.3 L10.8 15.2 L16.2 9.3" stroke="#138a5e" stroke-width="2" fill="none" stroke-linecap="round" stroke-linejoin="round"/></svg>
<div class="t" style="left:738.84px;top:1008.57px;font-size:26.50px;color:#138a5e;transform:scaleX(1.0201);transform-origin:0 0;">Finished</div>
<div class="t" style="left:877.00px;top:1006.28px;font-size:30.50px;color:#a8aaad;transform:scaleX(0.9748);transform-origin:0 0;">Add notes</div>
<div class="t" style="left:1055.40px;top:1006.28px;font-size:30.50px;color:#303439;transform:scaleX(0.9814);transform-origin:0 0;">carey</div>
<div class="t" style="left:1335.83px;top:1006.28px;font-size:30.50px;color:#303439;transform:scaleX(0.9568);transform-origin:0 0;">5y ago</div>
<div class="t" style="left:1515.57px;top:1006.28px;font-size:30.50px;color:#303439;transform:scaleX(0.9370);transform-origin:0 0;width:146.1px;overflow:hidden;padding-bottom:10px;">2m 34s</div>
<div class="t" style="left:1695.94px;top:1006.28px;font-size:30.50px;color:#2f7bc9;transform:scaleX(1.0292);transform-origin:0 0;">q9dwgphr</div>
<div class="t" style="left:1876.14px;top:1006.28px;font-size:30.50px;color:#303439;transform:scaleX(0.9410);transform-origin:0 0;">38</div>
<div class="t" style="left:2054.99px;top:1006.28px;font-size:30.50px;color:#303439;transform:scaleX(0.9410);transform-origin:0 0;">10</div>
<div class="t" style="left:2234.99px;top:1006.28px;font-size:30.50px;color:#303439;transform:scaleX(0.9410);transform-origin:0 0;">16</div>
<div class="t" style="left:2417.14px;top:1006.28px;font-size:30.50px;color:#303439;transform:scaleX(0.9410);transform-origin:0 0;">0.061686</div>
<div class="t" style="left:2597.14px;top:1006.28px;font-size:30.50px;color:#303439;transform:scaleX(0.9410);transform-origin:0 0;">3</div>
<div class="t" style="left:2776.14px;top:1006.28px;font-size:30.50px;color:#303439;transform:scaleX(0.9410);transform-origin:0 0;">0.017051</div>
<div class="t" style="left:2954.78px;top:1006.28px;font-size:30.50px;color:#303439;">-</div>
<div style="position:absolute;left:168px;top:1107.8999999999999px;width:4px;height:4px;background:#a6a6a6;border-radius:50%"></div>
<svg style="position:absolute;left:206px;top:1095.0px;" width="35" height="24" viewBox="0 0 35 24" fill="none"><path d="M1.5 12 C7 3.5 12 1.7 17.5 1.7 C23 1.7 28 3.5 33.5 12 C28 20.5 23 22.3 17.5 22.3 C12 22.3 7 20.5 1.5 12 Z" stroke="#2f78c8" stroke-width="2.4" stroke-linejoin="round" fill="none"/><circle cx="17.5" cy="12" r="6.5" fill="#2f78c8"/></svg>
<div style="position:absolute;left:260.5px;top:1093.5px;width:30.6px;height:30.6px;background:#A0C75C;border-radius:50%"></div>
<div class="t" style="left:306.78px;top:1094.28px;font-size:30.50px;color:#303439;">gallant-sweep-109</div>
<div style="position:absolute;left:696px;top:1086.8px;width:156px;height:44px;background:#d4f6e4;border-radius:22px"></div>
<svg style="position:absolute;left:705px;top:1096.8px;" width="24" height="24" viewBox="0 0 24 24" fill="none"><circle cx="12" cy="12" r="10.6" stroke="#138a5e" stroke-width="2"/><path d="M7.8 12.3 L10.8 15.2 L16.2 9.3" stroke="#138a5e" stroke-width="2" fill="none" stroke-linecap="round" stroke-linejoin="round"/></svg>
<div class="t" style="left:738.84px;top:1096.57px;font-size:26.50px;color:#138a5e;transform:scaleX(1.0201);transform-origin:0 0;">Finished</div>
<div class="t" style="left:877.00px;top:1094.28px;font-size:30.50px;color:#a8aaad;transform:scaleX(0.9748);transform-origin:0 0;">Add notes</div>
<div class="t" style="left:1055.40px;top:1094.28px;font-size:30.50px;color:#303439;transform:scaleX(0.9814);transform-origin:0 0;">carey</div>
<div class="t" style="left:1335.83px;top:1094.28px;font-size:30.50px;color:#303439;transform:scaleX(0.9568);transform-origin:0 0;">5y ago</div>
<div class="t" style="left:1515.57px;top:1094.28px;font-size:30.50px;color:#303439;transform:scaleX(0.9370);transform-origin:0 0;width:146.1px;overflow:hidden;padding-bottom:10px;">2m 35s</div>
<div class="t" style="left:1695.94px;top:1094.28px;font-size:30.50px;color:#2f7bc9;transform:scaleX(1.0292);transform-origin:0 0;">q9dwgphr</div>
<div class="t" style="left:1876.14px;top:1094.28px;font-size:30.50px;color:#303439;transform:scaleX(0.9410);transform-origin:0 0;">345</div>
<div class="t" style="left:2054.99px;top:1094.28px;font-size:30.50px;color:#303439;transform:scaleX(0.9410);transform-origin:0 0;">13</div>
<div class="t" style="left:2235.85px;top:1094.28px;font-size:30.50px;color:#303439;transform:scaleX(0.9410);transform-origin:0 0;">50</div>
<div class="t" style="left:2417.14px;top:1094.28px;font-size:30.50px;color:#303439;transform:scaleX(0.9410);transform-origin:0 0;">0.089794</div>
<div class="t" style="left:2597.43px;top:1094.28px;font-size:30.50px;color:#303439;transform:scaleX(0.9410);transform-origin:0 0;">4</div>
<div class="t" style="left:2776.14px;top:1094.28px;font-size:30.50px;color:#303439;transform:scaleX(0.9410);transform-origin:0 0;">0.049338</div>
<div class="t" style="left:2954.78px;top:1094.28px;font-size:30.50px;color:#303439;">-</div>
<div style="position:absolute;left:168px;top:1195.8999999999999px;width:4px;height:4px;background:#a6a6a6;border-radius:50%"></div>
<svg style="position:absolute;left:206px;top:1183.0px;" width="35" height="24" viewBox="0 0 35 24" fill="none"><path d="M1.5 12 C7 3.5 12 1.7 17.5 1.7 C23 1.7 28 3.5 33.5 12 C28 20.5 23 22.3 17.5 22.3 C12 22.3 7 20.5 1.5 12 Z" stroke="#2f78c8" stroke-width="2.4" stroke-linejoin="round" fill="none"/><circle cx="17.5" cy="12" r="6.5" fill="#2f78c8"/></svg>
<div style="position:absolute;left:260.5px;top:1181.5px;width:30.6px;height:30.6px;background:#F0B899;border-radius:50%"></div>
<div class="t" style="left:306.79px;top:1182.28px;font-size:30.50px;color:#303439;transform:scaleX(0.9889);transform-origin:0 0;">amber-sweep-108</div>
<div style="position:absolute;left:696px;top:1174.8px;width:156px;height:44px;background:#d4f6e4;border-radius:22px"></div>
<svg style="position:absolute;left:705px;top:1184.8px;" width="24" height="24" viewBox="0 0 24 24" fill="none"><circle cx="12" cy="12" r="10.6" stroke="#138a5e" stroke-width="2"/><path d="M7.8 12.3 L10.8 15.2 L16.2 9.3" stroke="#138a5e" stroke-width="2" fill="none" stroke-linecap="round" stroke-linejoin="round"/></svg>
<div class="t" style="left:738.84px;top:1184.57px;font-size:26.50px;color:#138a5e;transform:scaleX(1.0201);transform-origin:0 0;">Finished</div>
<div class="t" style="left:877.00px;top:1182.28px;font-size:30.50px;color:#a8aaad;transform:scaleX(0.9748);transform-origin:0 0;">Add notes</div>
<div class="t" style="left:1055.40px;top:1182.28px;font-size:30.50px;color:#303439;transform:scaleX(0.9814);transform-origin:0 0;">carey</div>
<div class="t" style="left:1335.83px;top:1182.28px;font-size:30.50px;color:#303439;transform:scaleX(0.9568);transform-origin:0 0;">5y ago</div>
<div class="t" style="left:1515.86px;top:1182.28px;font-size:30.50px;color:#303439;transform:scaleX(0.9370);transform-origin:0 0;width:145.8px;overflow:hidden;padding-bottom:10px;">52s</div>
<div class="t" style="left:1695.94px;top:1182.28px;font-size:30.50px;color:#2f7bc9;transform:scaleX(1.0292);transform-origin:0 0;">q9dwgphr</div>
<div class="t" style="left:1875.85px;top:1182.28px;font-size:30.50px;color:#303439;transform:scaleX(0.9410);transform-origin:0 0;">538</div>
<div class="t" style="left:2055.56px;top:1182.28px;font-size:30.50px;color:#303439;transform:scaleX(0.9410);transform-origin:0 0;">28</div>
<div class="t" style="left:2236.43px;top:1182.28px;font-size:30.50px;color:#303439;transform:scaleX(0.9410);transform-origin:0 0;">43</div>
<div class="t" style="left:2417.14px;top:1182.28px;font-size:30.50px;color:#303439;transform:scaleX(0.9410);transform-origin:0 0;">0.36841</div>
<div class="t" style="left:2595.99px;top:1182.28px;font-size:30.50px;color:#303439;transform:scaleX(0.9410);transform-origin:0 0;">1</div>
<div class="t" style="left:2776.14px;top:1182.28px;font-size:30.50px;color:#303439;transform:scaleX(0.9410);transform-origin:0 0;">0.050471</div>
<div class="t" style="left:2954.78px;top:1182.28px;font-size:30.50px;color:#303439;">-</div>
<div style="position:absolute;left:168px;top:1283.8999999999999px;width:4px;height:4px;background:#a6a6a6;border-radius:50%"></div>
<svg style="position:absolute;left:206px;top:1271.0px;" width="35" height="24" viewBox="0 0 35 24" fill="none"><path d="M1.5 12 C7 3.5 12 1.7 17.5 1.7 C23 1.7 28 3.5 33.5 12 C28 20.5 23 22.3 17.5 22.3 C12 22.3 7 20.5 1.5 12 Z" stroke="#2f78c8" stroke-width="2.4" stroke-linejoin="round" fill="none"/><circle cx="17.5" cy="12" r="6.5" fill="#2f78c8"/></svg>
<div style="position:absolute;left:260.5px;top:1269.5px;width:30.6px;height:30.6px;background:#229487;border-radius:50%"></div>
<div class="t" style="left:306.78px;top:1270.28px;font-size:30.50px;color:#303439;transform:scaleX(0.9989);transform-origin:0 0;">apricot-sweep-107</div>
<div style="position:absolute;left:696px;top:1262.8px;width:156px;height:44px;background:#d4f6e4;border-radius:22px"></div>
<svg style="position:absolute;left:705px;top:1272.8px;" width="24" height="24" viewBox="0 0 24 24" fill="none"><circle cx="12" cy="12" r="10.6" stroke="#138a5e" stroke-width="2"/><path d="M7.8 12.3 L10.8 15.2 L16.2 9.3" stroke="#138a5e" stroke-width="2" fill="none" stroke-linecap="round" stroke-linejoin="round"/></svg>
<div class="t" style="left:738.84px;top:1272.57px;font-size:26.50px;color:#138a5e;transform:scaleX(1.0201);transform-origin:0 0;">Finished</div>
<div class="t" style="left:877.00px;top:1270.28px;font-size:30.50px;color:#a8aaad;transform:scaleX(0.9748);transform-origin:0 0;">Add notes</div>
<div class="t" style="left:1055.40px;top:1270.28px;font-size:30.50px;color:#303439;transform:scaleX(0.9814);transform-origin:0 0;">carey</div>
<div class="t" style="left:1335.83px;top:1270.28px;font-size:30.50px;color:#303439;transform:scaleX(0.9568);transform-origin:0 0;">5y ago</div>
<div class="t" style="left:1515.57px;top:1270.28px;font-size:30.50px;color:#303439;transform:scaleX(0.9370);transform-origin:0 0;width:146.1px;overflow:hidden;padding-bottom:10px;">2m 57s</div>
<div class="t" style="left:1695.94px;top:1270.28px;font-size:30.50px;color:#2f7bc9;transform:scaleX(1.0292);transform-origin:0 0;">q9dwgphr</div>
<div class="t" style="left:1876.14px;top:1270.28px;font-size:30.50px;color:#303439;transform:scaleX(0.9410);transform-origin:0 0;">385</div>
<div class="t" style="left:2055.56px;top:1270.28px;font-size:30.50px;color:#303439;transform:scaleX(0.9410);transform-origin:0 0;">24</div>
<div class="t" style="left:2235.56px;top:1270.28px;font-size:30.50px;color:#303439;transform:scaleX(0.9410);transform-origin:0 0;">24</div>
<div class="t" style="left:2417.14px;top:1270.28px;font-size:30.50px;color:#303439;transform:scaleX(0.9410);transform-origin:0 0;">0.13728</div>
<div class="t" style="left:2596.85px;top:1270.28px;font-size:30.50px;color:#303439;transform:scaleX(0.9410);transform-origin:0 0;">5</div>
<div class="t" style="left:2776.14px;top:1270.28px;font-size:30.50px;color:#303439;transform:scaleX(0.9410);transform-origin:0 0;">0.091509</div>
<div class="t" style="left:2954.78px;top:1270.28px;font-size:30.50px;color:#303439;">-</div>
<div style="position:absolute;left:168px;top:1371.8999999999999px;width:4px;height:4px;background:#a6a6a6;border-radius:50%"></div>
<svg style="position:absolute;left:206px;top:1359.0px;" width="35" height="24" viewBox="0 0 35 24" fill="none"><path d="M1.5 12 C7 3.5 12 1.7 17.5 1.7 C23 1.7 28 3.5 33.5 12 C28 20.5 23 22.3 17.5 22.3 C12 22.3 7 20.5 1.5 12 Z" stroke="#2f78c8" stroke-width="2.4" stroke-linejoin="round" fill="none"/><circle cx="17.5" cy="12" r="6.5" fill="#2f78c8"/></svg>
<div style="position:absolute;left:260.5px;top:1357.5px;width:30.6px;height:30.6px;background:#5BC5DB;border-radius:50%"></div>
<div class="t" style="left:306.79px;top:1358.28px;font-size:30.50px;color:#303439;transform:scaleX(0.9944);transform-origin:0 0;">chocolate-sweep-106</div>
<div style="position:absolute;left:696px;top:1350.8px;width:156px;height:44px;background:#d4f6e4;border-radius:22px"></div>
<svg style="position:absolute;left:705px;top:1360.8px;" width="24" height="24" viewBox="0 0 24 24" fill="none"><circle cx="12" cy="12" r="10.6" stroke="#138a5e" stroke-width="2"/><path d="M7.8 12.3 L10.8 15.2 L16.2 9.3" stroke="#138a5e" stroke-width="2" fill="none" stroke-linecap="round" stroke-linejoin="round"/></svg>
<div class="t" style="left:738.84px;top:1360.57px;font-size:26.50px;color:#138a5e;transform:scaleX(1.0201);transform-origin:0 0;">Finished</div>
<div class="t" style="left:877.00px;top:1358.28px;font-size:30.50px;color:#a8aaad;transform:scaleX(0.9748);transform-origin:0 0;">Add notes</div>
<div class="t" style="left:1055.40px;top:1358.28px;font-size:30.50px;color:#303439;transform:scaleX(0.9814);transform-origin:0 0;">carey</div>
<div class="t" style="left:1335.83px;top:1358.28px;font-size:30.50px;color:#303439;transform:scaleX(0.9568);transform-origin:0 0;">5y ago</div>
<div class="t" style="left:1515.57px;top:1358.28px;font-size:30.50px;color:#303439;transform:scaleX(0.9370);transform-origin:0 0;width:146.1px;overflow:hidden;padding-bottom:10px;">2m 33s</div>
<div class="t" style="left:1695.94px;top:1358.28px;font-size:30.50px;color:#2f7bc9;transform:scaleX(1.0292);transform-origin:0 0;">q9dwgphr</div>
<div class="t" style="left:1874.99px;top:1358.28px;font-size:30.50px;color:#303439;transform:scaleX(0.9410);transform-origin:0 0;">158</div>
<div class="t" style="left:2054.99px;top:1358.28px;font-size:30.50px;color:#303439;transform:scaleX(0.9410);transform-origin:0 0;">16</div>
<div class="t" style="left:2236.14px;top:1358.28px;font-size:30.50px;color:#303439;transform:scaleX(0.9410);transform-origin:0 0;">35</div>
<div class="t" style="left:2417.14px;top:1358.28px;font-size:30.50px;color:#303439;transform:scaleX(0.9410);transform-origin:0 0;">0.079577</div>
<div class="t" style="left:2597.43px;top:1358.28px;font-size:30.50px;color:#303439;transform:scaleX(0.9410);transform-origin:0 0;">4</div>
<div class="t" style="left:2776.14px;top:1358.28px;font-size:30.50px;color:#303439;transform:scaleX(0.9410);transform-origin:0 0;">0.020975</div>
<div class="t" style="left:2954.78px;top:1358.28px;font-size:30.50px;color:#303439;">-</div>
<div style="position:absolute;left:168px;top:1459.8999999999999px;width:4px;height:4px;background:#a6a6a6;border-radius:50%"></div>
<svg style="position:absolute;left:206px;top:1447.0px;" width="35" height="24" viewBox="0 0 35 24" fill="none"><path d="M1.5 12 C7 3.5 12 1.7 17.5 1.7 C23 1.7 28 3.5 33.5 12 C28 20.5 23 22.3 17.5 22.3 C12 22.3 7 20.5 1.5 12 Z" stroke="#2f78c8" stroke-width="2.4" stroke-linejoin="round" fill="none"/><circle cx="17.5" cy="12" r="6.5" fill="#2f78c8"/></svg>
<div style="position:absolute;left:260.5px;top:1445.5px;width:30.6px;height:30.6px;background:#EDB732;border-radius:50%"></div>
<div class="t" style="left:306.17px;top:1446.28px;font-size:30.50px;color:#303439;">rural-sweep-105</div>
<div style="position:absolute;left:696px;top:1438.8px;width:156px;height:44px;background:#d4f6e4;border-radius:22px"></div>
<svg style="position:absolute;left:705px;top:1448.8px;" width="24" height="24" viewBox="0 0 24 24" fill="none"><circle cx="12" cy="12" r="10.6" stroke="#138a5e" stroke-width="2"/><path d="M7.8 12.3 L10.8 15.2 L16.2 9.3" stroke="#138a5e" stroke-width="2" fill="none" stroke-linecap="round" stroke-linejoin="round"/></svg>
<div class="t" style="left:738.84px;top:1448.57px;font-size:26.50px;color:#138a5e;transform:scaleX(1.0201);transform-origin:0 0;">Finished</div>
<div class="t" style="left:877.00px;top:1446.28px;font-size:30.50px;color:#a8aaad;transform:scaleX(0.9748);transform-origin:0 0;">Add notes</div>
<div class="t" style="left:1055.40px;top:1446.28px;font-size:30.50px;color:#303439;transform:scaleX(0.9814);transform-origin:0 0;">carey</div>
<div class="t" style="left:1335.83px;top:1446.28px;font-size:30.50px;color:#303439;transform:scaleX(0.9568);transform-origin:0 0;">5y ago</div>
<div class="t" style="left:1515.00px;top:1446.28px;font-size:30.50px;color:#303439;transform:scaleX(0.9370);transform-origin:0 0;width:146.7px;overflow:hidden;padding-bottom:10px;">1m 16s</div>
<div class="t" style="left:1695.94px;top:1446.28px;font-size:30.50px;color:#2f7bc9;transform:scaleX(1.0292);transform-origin:0 0;">q9dwgphr</div>
<div class="t" style="left:1875.56px;top:1446.28px;font-size:30.50px;color:#303439;transform:scaleX(0.9410);transform-origin:0 0;">270</div>
<div class="t" style="left:2055.85px;top:1446.28px;font-size:30.50px;color:#303439;transform:scaleX(0.9410);transform-origin:0 0;">9</div>
<div class="t" style="left:2236.43px;top:1446.28px;font-size:30.50px;color:#303439;transform:scaleX(0.9410);transform-origin:0 0;">47</div>
<div class="t" style="left:2417.14px;top:1446.28px;font-size:30.50px;color:#303439;transform:scaleX(0.9410);transform-origin:0 0;">0.26023</div>
<div class="t" style="left:2596.56px;top:1446.28px;font-size:30.50px;color:#303439;transform:scaleX(0.9410);transform-origin:0 0;">2</div>
<div class="t" style="left:2776.14px;top:1446.28px;font-size:30.50px;color:#303439;transform:scaleX(0.9410);transform-origin:0 0;">0.0040085</div>
<div class="t" style="left:2954.78px;top:1446.28px;font-size:30.50px;color:#303439;">-</div>
<div style="position:absolute;left:168px;top:1547.8999999999999px;width:4px;height:4px;background:#a6a6a6;border-radius:50%"></div>
<svg style="position:absolute;left:206px;top:1535.0px;" width="35" height="24" viewBox="0 0 35 24" fill="none"><path d="M1.5 12 C7 3.5 12 1.7 17.5 1.7 C23 1.7 28 3.5 33.5 12 C28 20.5 23 22.3 17.5 22.3 C12 22.3 7 20.5 1.5 12 Z" stroke="#2f78c8" stroke-width="2.4" stroke-linejoin="round" fill="none"/><circle cx="17.5" cy="12" r="6.5" fill="#2f78c8"/></svg>
<div style="position:absolute;left:260.5px;top:1533.5px;width:30.6px;height:30.6px;background:#C565C7;border-radius:50%"></div>
<div class="t" style="left:306.79px;top:1534.28px;font-size:30.50px;color:#303439;transform:scaleX(0.9934);transform-origin:0 0;">chocolate-sweep-104</div>
<div style="position:absolute;left:696px;top:1526.8px;width:156px;height:44px;background:#d4f6e4;border-radius:22px"></div>
<svg style="position:absolute;left:705px;top:1536.8px;" width="24" height="24" viewBox="0 0 24 24" fill="none"><circle cx="12" cy="12" r="10.6" stroke="#138a5e" stroke-width="2"/><path d="M7.8 12.3 L10.8 15.2 L16.2 9.3" stroke="#138a5e" stroke-width="2" fill="none" stroke-linecap="round" stroke-linejoin="round"/></svg>
<div class="t" style="left:738.84px;top:1536.57px;font-size:26.50px;color:#138a5e;transform:scaleX(1.0201);transform-origin:0 0;">Finished</div>
<div class="t" style="left:877.00px;top:1534.28px;font-size:30.50px;color:#a8aaad;transform:scaleX(0.9748);transform-origin:0 0;">Add notes</div>
<div class="t" style="left:1055.40px;top:1534.28px;font-size:30.50px;color:#303439;transform:scaleX(0.9814);transform-origin:0 0;">carey</div>
<div class="t" style="left:1335.83px;top:1534.28px;font-size:30.50px;color:#303439;transform:scaleX(0.9568);transform-origin:0 0;">5y ago</div>
<div class="t" style="left:1516.14px;top:1534.28px;font-size:30.50px;color:#303439;transform:scaleX(0.9370);transform-origin:0 0;width:145.5px;overflow:hidden;padding-bottom:10px;">37s</div>
<div class="t" style="left:1695.94px;top:1534.28px;font-size:30.50px;color:#2f7bc9;transform:scaleX(1.0292);transform-origin:0 0;">q9dwgphr</div>
<div class="t" style="left:1876.14px;top:1534.28px;font-size:30.50px;color:#303439;transform:scaleX(0.9410);transform-origin:0 0;">341</div>
<div class="t" style="left:2054.99px;top:1534.28px;font-size:30.50px;color:#303439;transform:scaleX(0.9410);transform-origin:0 0;">14</div>
<div class="t" style="left:2234.99px;top:1534.28px;font-size:30.50px;color:#303439;transform:scaleX(0.9410);transform-origin:0 0;">19</div>
<div class="t" style="left:2417.14px;top:1534.28px;font-size:30.50px;color:#303439;transform:scaleX(0.9410);transform-origin:0 0;">0.23502</div>
<div class="t" style="left:2595.99px;top:1534.28px;font-size:30.50px;color:#303439;transform:scaleX(0.9410);transform-origin:0 0;">1</div>
<div class="t" style="left:2776.14px;top:1534.28px;font-size:30.50px;color:#303439;transform:scaleX(0.9410);transform-origin:0 0;">0.031126</div>
<div class="t" style="left:2954.78px;top:1534.28px;font-size:30.50px;color:#303439;">-</div>
<div style="position:absolute;left:168px;top:1635.8999999999999px;width:4px;height:4px;background:#a6a6a6;border-radius:50%"></div>
<svg style="position:absolute;left:206px;top:1623.0px;" width="35" height="24" viewBox="0 0 35 24" fill="none"><path d="M1.5 12 C7 3.5 12 1.7 17.5 1.7 C23 1.7 28 3.5 33.5 12 C28 20.5 23 22.3 17.5 22.3 C12 22.3 7 20.5 1.5 12 Z" stroke="#2f78c8" stroke-width="2.4" stroke-linejoin="round" fill="none"/><circle cx="17.5" cy="12" r="6.5" fill="#2f78c8"/></svg>
<div style="position:absolute;left:260.5px;top:1621.5px;width:30.6px;height:30.6px;background:#87CEBF;border-radius:50%"></div>
<div class="t" style="left:307.41px;top:1622.28px;font-size:30.50px;color:#303439;transform:scaleX(0.9741);transform-origin:0 0;">sweepy-sweep-103</div>
<div style="position:absolute;left:696px;top:1614.8px;width:156px;height:44px;background:#d4f6e4;border-radius:22px"></div>
<svg style="position:absolute;left:705px;top:1624.8px;" width="24" height="24" viewBox="0 0 24 24" fill="none"><circle cx="12" cy="12" r="10.6" stroke="#138a5e" stroke-width="2"/><path d="M7.8 12.3 L10.8 15.2 L16.2 9.3" stroke="#138a5e" stroke-width="2" fill="none" stroke-linecap="round" stroke-linejoin="round"/></svg>
<div class="t" style="left:738.84px;top:1624.57px;font-size:26.50px;color:#138a5e;transform:scaleX(1.0201);transform-origin:0 0;">Finished</div>
<div class="t" style="left:877.00px;top:1622.28px;font-size:30.50px;color:#a8aaad;transform:scaleX(0.9748);transform-origin:0 0;">Add notes</div>
<div class="t" style="left:1055.40px;top:1622.28px;font-size:30.50px;color:#303439;transform:scaleX(0.9814);transform-origin:0 0;">carey</div>
<div class="t" style="left:1335.83px;top:1622.28px;font-size:30.50px;color:#303439;transform:scaleX(0.9568);transform-origin:0 0;">5y ago</div>
<div class="t" style="left:1515.00px;top:1622.28px;font-size:30.50px;color:#303439;transform:scaleX(0.9370);transform-origin:0 0;width:146.7px;overflow:hidden;padding-bottom:10px;">1m 57s</div>
<div class="t" style="left:1695.94px;top:1622.28px;font-size:30.50px;color:#2f7bc9;transform:scaleX(1.0292);transform-origin:0 0;">q9dwgphr</div>
<div class="t" style="left:1876.14px;top:1622.28px;font-size:30.50px;color:#303439;transform:scaleX(0.9410);transform-origin:0 0;">338</div>
<div class="t" style="left:2054.99px;top:1622.28px;font-size:30.50px;color:#303439;transform:scaleX(0.9410);transform-origin:0 0;">15</div>
<div class="t" style="left:2236.14px;top:1622.28px;font-size:30.50px;color:#303439;transform:scaleX(0.9410);transform-origin:0 0;">37</div>
<div class="t" style="left:2417.14px;top:1622.28px;font-size:30.50px;color:#303439;transform:scaleX(0.9410);transform-origin:0 0;">0.21674</div>
<div class="t" style="left:2597.14px;top:1622.28px;font-size:30.50px;color:#303439;transform:scaleX(0.9410);transform-origin:0 0;">3</div>
<div class="t" style="left:2776.14px;top:1622.28px;font-size:30.50px;color:#303439;transform:scaleX(0.9410);transform-origin:0 0;">0.0004705</div>
<div class="t" style="left:2954.78px;top:1622.28px;font-size:30.50px;color:#303439;">-</div>
<div style="position:absolute;left:168px;top:1723.8999999999999px;width:4px;height:4px;background:#a6a6a6;border-radius:50%"></div>
<svg style="position:absolute;left:206px;top:1711.0px;" width="35" height="24" viewBox="0 0 35 24" fill="none"><path d="M1.5 12 C7 3.5 12 1.7 17.5 1.7 C23 1.7 28 3.5 33.5 12 C28 20.5 23 22.3 17.5 22.3 C12 22.3 7 20.5 1.5 12 Z" stroke="#2f78c8" stroke-width="2.4" stroke-linejoin="round" fill="none"/><circle cx="17.5" cy="12" r="6.5" fill="#2f78c8"/></svg>
<div style="position:absolute;left:260.5px;top:1709.5px;width:30.6px;height:30.6px;background:#E57439;border-radius:50%"></div>
<div class="t" style="left:308.91px;top:1710.28px;font-size:30.50px;color:#303439;transform:scaleX(0.9976);transform-origin:0 0;">jolly-sweep-102</div>
<div style="position:absolute;left:696px;top:1702.8px;width:156px;height:44px;background:#d4f6e4;border-radius:22px"></div>
<svg style="position:absolute;left:705px;top:1712.8px;" width="24" height="24" viewBox="0 0 24 24" fill="none"><circle cx="12" cy="12" r="10.6" stroke="#138a5e" stroke-width="2"/><path d="M7.8 12.3 L10.8 15.2 L16.2 9.3" stroke="#138a5e" stroke-width="2" fill="none" stroke-linecap="round" stroke-linejoin="round"/></svg>
<div class="t" style="left:738.84px;top:1712.57px;font-size:26.50px;color:#138a5e;transform:scaleX(1.0201);transform-origin:0 0;">Finished</div>
<div class="t" style="left:877.00px;top:1710.28px;font-size:30.50px;color:#a8aaad;transform:scaleX(0.9748);transform-origin:0 0;">Add notes</div>
<div class="t" style="left:1055.40px;top:1710.28px;font-size:30.50px;color:#303439;transform:scaleX(0.9814);transform-origin:0 0;">carey</div>
<div class="t" style="left:1335.83px;top:1710.28px;font-size:30.50px;color:#303439;transform:scaleX(0.9568);transform-origin:0 0;">5y ago</div>
<div class="t" style="left:1515.57px;top:1710.28px;font-size:30.50px;color:#303439;transform:scaleX(0.9370);transform-origin:0 0;width:146.1px;overflow:hidden;padding-bottom:10px;">2m 20s</div>
<div class="t" style="left:1695.94px;top:1710.28px;font-size:30.50px;color:#2f7bc9;transform:scaleX(1.0292);transform-origin:0 0;">q9dwgphr</div>
<div class="t" style="left:1875.56px;top:1710.28px;font-size:30.50px;color:#303439;transform:scaleX(0.9410);transform-origin:0 0;">285</div>
<div class="t" style="left:2054.99px;top:1710.28px;font-size:30.50px;color:#303439;transform:scaleX(0.9410);transform-origin:0 0;">15</div>
<div class="t" style="left:2235.56px;top:1710.28px;font-size:30.50px;color:#303439;transform:scaleX(0.9410);transform-origin:0 0;">20</div>
<div class="t" style="left:2417.14px;top:1710.28px;font-size:30.50px;color:#303439;transform:scaleX(0.9410);transform-origin:0 0;">0.16632</div>
<div class="t" style="left:2597.43px;top:1710.28px;font-size:30.50px;color:#303439;transform:scaleX(0.9410);transform-origin:0 0;">4</div>
<div class="t" style="left:2776.14px;top:1710.28px;font-size:30.50px;color:#303439;transform:scaleX(0.9410);transform-origin:0 0;">0.09983</div>
<div class="t" style="left:2954.78px;top:1710.28px;font-size:30.50px;color:#303439;">-</div>
<div style="position:absolute;left:168px;top:1811.8999999999999px;width:4px;height:4px;background:#a6a6a6;border-radius:50%"></div>
<svg style="position:absolute;left:206px;top:1799.0px;" width="35" height="24" viewBox="0 0 35 24" fill="none"><path d="M1.5 12 C7 3.5 12 1.7 17.5 1.7 C23 1.7 28 3.5 33.5 12 C28 20.5 23 22.3 17.5 22.3 C12 22.3 7 20.5 1.5 12 Z" stroke="#2f78c8" stroke-width="2.4" stroke-linejoin="round" fill="none"/><circle cx="17.5" cy="12" r="6.5" fill="#2f78c8"/></svg>
<div style="position:absolute;left:260.5px;top:1797.5px;width:30.6px;height:30.6px;background:#E87B9F;border-radius:50%"></div>
<div class="t" style="left:307.70px;top:1798.28px;font-size:30.50px;color:#303439;transform:scaleX(0.9868);transform-origin:0 0;">fine-sweep-101</div>
<div style="position:absolute;left:696px;top:1790.8px;width:156px;height:44px;background:#d4f6e4;border-radius:22px"></div>
<svg style="position:absolute;left:705px;top:1800.8px;" width="24" height="24" viewBox="0 0 24 24" fill="none"><circle cx="12" cy="12" r="10.6" stroke="#138a5e" stroke-width="2"/><path d="M7.8 12.3 L10.8 15.2 L16.2 9.3" stroke="#138a5e" stroke-width="2" fill="none" stroke-linecap="round" stroke-linejoin="round"/></svg>
<div class="t" style="left:738.84px;top:1800.57px;font-size:26.50px;color:#138a5e;transform:scaleX(1.0201);transform-origin:0 0;">Finished</div>
<div class="t" style="left:877.00px;top:1798.28px;font-size:30.50px;color:#a8aaad;transform:scaleX(0.9748);transform-origin:0 0;">Add notes</div>
<div class="t" style="left:1055.40px;top:1798.28px;font-size:30.50px;color:#303439;transform:scaleX(0.9814);transform-origin:0 0;">carey</div>
<div class="t" style="left:1335.83px;top:1798.28px;font-size:30.50px;color:#303439;transform:scaleX(0.9568);transform-origin:0 0;">5y ago</div>
<div class="t" style="left:1515.57px;top:1798.28px;font-size:30.50px;color:#303439;transform:scaleX(0.9370);transform-origin:0 0;width:146.1px;overflow:hidden;padding-bottom:10px;">2m 54s</div>
<div class="t" style="left:1695.94px;top:1798.28px;font-size:30.50px;color:#2f7bc9;transform:scaleX(1.0292);transform-origin:0 0;">q9dwgphr</div>
<div class="t" style="left:1875.56px;top:1798.28px;font-size:30.50px;color:#303439;transform:scaleX(0.9410);transform-origin:0 0;">287</div>
<div class="t" style="left:2054.99px;top:1798.28px;font-size:30.50px;color:#303439;transform:scaleX(0.9410);transform-origin:0 0;">16</div>
<div class="t" style="left:2236.14px;top:1798.28px;font-size:30.50px;color:#303439;transform:scaleX(0.9410);transform-origin:0 0;">35</div>
<div class="t" style="left:2417.14px;top:1798.28px;font-size:30.50px;color:#303439;transform:scaleX(0.9410);transform-origin:0 0;">0.15268</div>
<div class="t" style="left:2596.85px;top:1798.28px;font-size:30.50px;color:#303439;transform:scaleX(0.9410);transform-origin:0 0;">5</div>
<div class="t" style="left:2776.14px;top:1798.28px;font-size:30.50px;color:#303439;transform:scaleX(0.9410);transform-origin:0 0;">0.029006</div>
<div class="t" style="left:2954.78px;top:1798.28px;font-size:30.50px;color:#303439;">-</div>
<div style="position:absolute;left:168px;top:1899.8999999999999px;width:4px;height:4px;background:#a6a6a6;border-radius:50%"></div>
<svg style="position:absolute;left:206px;top:1887.0px;" width="35" height="24" viewBox="0 0 35 24" fill="none"><path d="M1.5 12 C7 3.5 12 1.7 17.5 1.7 C23 1.7 28 3.5 33.5 12 C28 20.5 23 22.3 17.5 22.3 C12 22.3 7 20.5 1.5 12 Z" stroke="#2f78c8" stroke-width="2.4" stroke-linejoin="round" fill="none"/><circle cx="17.5" cy="12" r="6.5" fill="#2f78c8"/></svg>
<div style="position:absolute;left:260.5px;top:1885.5px;width:30.6px;height:30.6px;background:#7D54B2;border-radius:50%"></div>
<div class="t" style="left:306.81px;top:1886.28px;font-size:30.50px;color:#303439;transform:scaleX(0.9726);transform-origin:0 0;">zany-sweep-100</div>
<div style="position:absolute;left:696px;top:1878.8px;width:156px;height:44px;background:#d4f6e4;border-radius:22px"></div>
<svg style="position:absolute;left:705px;top:1888.8px;" width="24" height="24" viewBox="0 0 24 24" fill="none"><circle cx="12" cy="12" r="10.6" stroke="#138a5e" stroke-width="2"/><path d="M7.8 12.3 L10.8 15.2 L16.2 9.3" stroke="#138a5e" stroke-width="2" fill="none" stroke-linecap="round" stroke-linejoin="round"/></svg>
<div class="t" style="left:738.84px;top:1888.57px;font-size:26.50px;color:#138a5e;transform:scaleX(1.0201);transform-origin:0 0;">Finished</div>
<div class="t" style="left:877.00px;top:1886.28px;font-size:30.50px;color:#a8aaad;transform:scaleX(0.9748);transform-origin:0 0;">Add notes</div>
<div class="t" style="left:1055.40px;top:1886.28px;font-size:30.50px;color:#303439;transform:scaleX(0.9814);transform-origin:0 0;">carey</div>
<div class="t" style="left:1335.83px;top:1886.28px;font-size:30.50px;color:#303439;transform:scaleX(0.9568);transform-origin:0 0;">5y ago</div>
<div class="t" style="left:1515.57px;top:1886.28px;font-size:30.50px;color:#303439;transform:scaleX(0.9370);transform-origin:0 0;width:146.1px;overflow:hidden;padding-bottom:10px;">2m 24s</div>
<div class="t" style="left:1695.94px;top:1886.28px;font-size:30.50px;color:#2f7bc9;transform:scaleX(1.0292);transform-origin:0 0;">q9dwgphr</div>
<div class="t" style="left:1875.85px;top:1886.28px;font-size:30.50px;color:#303439;transform:scaleX(0.9410);transform-origin:0 0;">596</div>
<div class="t" style="left:2056.14px;top:1886.28px;font-size:30.50px;color:#303439;transform:scaleX(0.9410);transform-origin:0 0;">31</div>
<div class="t" style="left:2236.14px;top:1886.28px;font-size:30.50px;color:#303439;transform:scaleX(0.9410);transform-origin:0 0;">37</div>
<div class="t" style="left:2417.14px;top:1886.28px;font-size:30.50px;color:#303439;transform:scaleX(0.9410);transform-origin:0 0;">0.48219</div>
<div class="t" style="left:2597.14px;top:1886.28px;font-size:30.50px;color:#303439;transform:scaleX(0.9410);transform-origin:0 0;">3</div>
<div style="position:absolute;left:2641px;top:1882px;width:357px;height:84px;background:#fff;border-radius:16px;box-shadow:0 0 5px rgba(0,0,0,.10)"></div>
<div class="t" style="left:2679.01px;top:1910.28px;font-size:28.49px;color:#303439;font-weight:400;">1-20</div>
<svg style="position:absolute;left:2744px;top:1921px;" width="17" height="10" viewBox="0 0 17 10" fill="none"><path d="M0.5 0.5 H16.5 L8.5 9.5 Z" fill="#1d2025"/></svg>
<div class="t" style="left:2785.83px;top:1909.67px;font-size:29.21px;color:#303439;font-weight:400;">of 183</div>
<svg style="position:absolute;left:2901px;top:1913px;" width="17" height="26" viewBox="0 0 17 26" fill="none"><path d="M14 2 L3 13 L14 24" stroke="#2b3038" stroke-width="2.2" fill="none"/></svg>
<svg style="position:absolute;left:2951px;top:1913px;" width="17" height="26" viewBox="0 0 17 26" fill="none"><path d="M3 2 L14 13 L3 24" stroke="#6b7078" stroke-width="2.2" fill="none"/></svg>
<div style="position:absolute;left:3000px;top:0px;width:2px;height:1972px;background:#3d3d3d"></div>
<div style="position:absolute;left:0px;top:1966px;width:1.5px;height:6px;background:#111"></div>
</body></html>
